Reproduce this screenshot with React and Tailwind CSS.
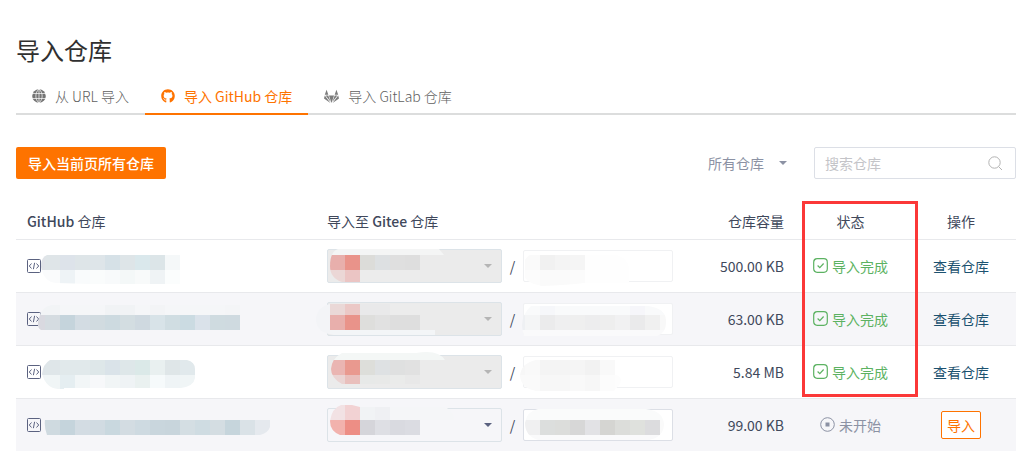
import React from 'react';
import { FaGithub } from 'react-icons/fa';

const GlobeIcon = () => (
  <svg viewBox="0 0 14 14" className="size-[14px] text-[#757575]" aria-hidden="true">
    <circle cx="7" cy="7" r="6.8" fill="currentColor" />
    <path d="M0 4.500h14M0 9.500h14M7 0v14M7 0C2.800 3.500 2.800 10.500 7 14M7 0c4.200 3.500 4.200 10.500 0 14" fill="none" stroke="#fff" strokeWidth="0.7" />
  </svg>
);

const GitlabIcon = () => (
  <svg viewBox="0 0 28 28" className="size-[15px] text-[#7c7c7c]" fill="currentColor" aria-hidden="true">
    <path d="M1.500 12L12 26 0.600 18c-.4-.3-.6-.8-.4-1.300zM9.200 12h9.600L14 26zM26.500 12L16 26l11.400-8c.4-.3.6-.8.4-1.300zM4.800 1.500l3.300 9.300H1.500zM23.200 1.500l3.300 9.300h-6.600zM3 12h5l4.200 12zM25 12h-5l-4.200 12z" />
  </svg>
);

const CodeIcon = () => (
  <svg viewBox="0 0 14 14" className="size-[14px] shrink-0" fill="none" stroke="#5b6280" aria-hidden="true">
    <rect x="0.5" y="0.5" width="13" height="13" rx="1" />
    <path d="M4.500 4.500L2.300 7l2.200 2.500M9.500 4.500L11.700 7l-2.200 2.500M7.600 3.800l-1.200 6.400" />
  </svg>
);

const DoneIcon = () => (
  <svg viewBox="0 0 15 15" className="size-[15px] shrink-0" fill="none" stroke="currentColor" strokeWidth="1.2" aria-hidden="true">
    <rect x="0.7" y="0.7" width="13.6" height="13.6" rx="3.5" />
    <path d="M4.600 7.500l2.200 2.200 3.800-4.200" />
  </svg>
);

const PendingIcon = () => (
  <svg viewBox="0 0 15 15" className="size-[15px] shrink-0" fill="none" stroke="currentColor" aria-hidden="true">
    <circle cx="7.5" cy="7.5" r="6.8" />
    <rect x="5.5" y="5.5" width="4" height="4" fill="currentColor" stroke="none" />
  </svg>
);

const SearchIcon = () => (
  <svg viewBox="0 0 15 15" className="size-[15px] shrink-0" fill="none" stroke="#b3b3b3" aria-hidden="true">
    <circle cx="6.5" cy="6.5" r="5.7" />
    <path d="M10.700 10.700l3.300 3.300" />
  </svg>
);

const Caret = ({ className }) => (
  <svg viewBox="0 0 8 4" className={className} fill="currentColor" aria-hidden="true">
    <path d="M0 0h8L4 4z" />
  </svg>
);

const CELL = 15;

/* Censored text: strips of coloured cells, cut to a rounded outline. */
function Mosaic({ id, outline, strips }) {
  return (
    <svg className="pointer-events-none absolute top-0 left-0 size-px overflow-visible" aria-hidden="true">
      <clipPath id={id}>
        <path d={outline} />
      </clipPath>
      <g clipPath={`url(#${id})`} shapeRendering="crispEdges">
        {strips.map(({ x, y, h, colors }) =>
          colors.map((fill, i) => (
            <rect key={`${x}-${y}-${i}`} x={x + i * CELL} y={y} width={CELL} height={h} fill={fill} />
          ))
        )}
      </g>
    </svg>
  );
}

const rows = [
  {
    size: '500.00 KB',
    done: true,
    source: {
      outline: 'M31 15H164V45H110L40 43Q28 42 25 27Q25 17 31 15z',
      strips: [
        { x: 14, y: 15, h: 15, colors: ['#e0e3e8', '#dfe5e8', '#dde3ea', '#dee5e8', '#dee5e9', '#d6e1e7', '#dee5e8', '#dae8ec', '#dce5e8', '#f5f8f9'] },
        { x: 14, y: 30, h: 14, colors: ['#fafbfc', '#fafbfc', '#eef3f6', '#f9fbfc', '#fafcfc', '#f8fafb', '#f4f8f8', '#f8fafa', '#eff3f5', '#fbfdfd'] },
      ],
    },
    owner: {
      outline: 'M22 9H123L128 15V42H26Q14 38 14 26Q14 12 22 9z',
      strips: [
        { x: 14, y: 9, h: 6, colors: ['#f4f5f5', '#f4f5f5', '#f4f5f5', '#f4f5f5', '#f4f5f5', '#f4f5f5', '#f4f5f5', '#f4f5f5'] },
        { x: 14, y: 15, h: 15, colors: ['#e8afac', '#e9938a', '#dcdcd9', '#dde0e2', '#dfdfdf', '#dedede'] },
        { x: 14, y: 30, h: 12, colors: ['#ebd7d6', '#ebc5c4', '#ececec', '#ececec', '#ececec', '#ececec'] },
      ],
    },
    name: {
      outline: 'M216 14H292Q312 15 313 29V43H268Q252 45 226 46Q207 43 206 30Q208 16 216 14z',
      strips: [
        { x: 209, y: 15, h: 15, colors: ['#fafafa', '#f1f1f1', '#f4f4f4', '#f5f5f5', '#fefefe', '#fefefe', '#fefefe'] },
        { x: 209, y: 30, h: 16, colors: ['#fcfcfc', '#fafafa', '#fafafa', '#fbfbfb', '#fefefe', '#fefefe', '#fefefe'] },
      ],
    },
  },
  {
    size: '63.00 KB',
    done: true,
    source: {
      outline: 'M36 12H224V37H25Q20 34 23 25Q26 13 36 12z',
      strips: [
        { x: 14, y: 12, h: 10, colors: ['#f2f4f6', '#f2f4f6', '#f5f6f8', '#f5f6f8', '#f5f6f8', '#f1f3f5', '#f1f3f5', '#f5f6f8', '#f3f4f6', '#f5f6f8', '#f5f6f8', '#f5f6f8', '#f5f6f8', '#f4f5f7'] },
        { x: 14, y: 22, h: 15, colors: ['#d9d9e0', '#d5dce1', '#c5d4dc', '#d3dce3', '#d1dbe0', '#cddae0', '#d3dde1', '#cfd9e0', '#d8e3e8', '#d0dde2', '#cbdbe2', '#dae2ea', '#cfdbe0', '#cfdae0'] },
      ],
    },
    owner: {
      outline: 'M14 11H134V40L127 42H18Q0 40 0 26Q1 14 14 11z',
      strips: [
        { x: -1, y: 11, h: 32, colors: ['#f3f4f7'] },
        { x: 14, y: 11, h: 11, colors: ['#ead8d7', '#ebc8c6', '#e9e9ea', '#e9e9ea', '#ececec', '#ececec'] },
        { x: 14, y: 22, h: 15, colors: ['#e8afac', '#e9938a', '#dededc', '#e1e1e1', '#dedede', '#dedede'] },
        { x: 14, y: 37, h: 5, colors: ['#f3f5f7', '#f3f5f7', '#f3f5f7', '#f3f5f7', '#f3f5f7', '#f3f5f7', '#f3f5f7'] },
      ],
    },
    name: {
      outline: 'M215 13H332Q349 15 350 27Q351 40 341 43H208Q202 25 215 13z',
      strips: [
        { x: 194, y: 13, h: 9, colors: ['#f9fafb', '#f9fafb', '#f6f7fa', '#f9fafb', '#f9fafb', '#f9fafb', '#f9fafb', '#f9fafb', '#f6f6fa', '#f9fafb', '#f9fafb'] },
        { x: 194, y: 22, h: 15, colors: ['#eef0f3', '#f4f5f6', '#ebebec', '#efeff0', '#efefef', '#ededee', '#eeeeee', '#f1f1f2', '#eaeaeb', '#f0f0f0', '#f8f8f8'] },
        { x: 194, y: 37, h: 6, colors: ['#fafafb', '#fafafb', '#fafafb', '#fafafb', '#fafafb', '#fafafb', '#fafafb', '#fafafb', '#fafafb', '#fafafb', '#fafafb'] },
      ],
    },
  },
  {
    size: '5.84 MB',
    done: true,
    source: {
      outline: 'M34 14H171Q179 16 179 23V32Q178 40 165 42H48V43H42Q30 42 26 28Q27 18 34 14z',
      strips: [
        { x: 14, y: 14, h: 15, colors: ['#dfe5e9', '#dfe6e9', '#e1e9eb', '#e1e9eb', '#dee7e9', '#dae3e9', '#dee7e9', '#dbe9e8', '#e9f0f0', '#dfe6e8', '#e1e9ec'] },
        { x: 14, y: 29, h: 15, colors: ['#f0f4f6', '#f0f5f6', '#e5eef1', '#f2f6f7', '#f7f8fa', '#f1f5f6', '#eff3f5', '#eaf1f0', '#f6fafb', '#eff4f6', '#f0f5f6'] },
      ],
    },
    owner: {
      outline: 'M26 7L100 7Q122 3 129 14V38H26Q15 32 15 23Q16 12 26 7z',
      strips: [
        { x: 14, y: 5, h: 9, colors: ['#f4f7f6', '#f4f7f6', '#f4f7f6', '#f4f7f6', '#f4f7f6', '#f4f7f6', '#f4f7f6', '#f4f7f6'] },
        { x: 14, y: 14, h: 15, colors: ['#eab5b2', '#e9998f', '#dddeda', '#dee1e3', '#dfe0e0', '#e1e1e1'] },
        { x: 14, y: 29, h: 9, colors: ['#ead4d3', '#e9bfbc', '#e7e9e8', '#e8e9e8', '#eaebea', '#e8e8e8'] },
      ],
    },
    name: {
      outline: 'M220 14H299V29Q307 30 304 38L298 45H220Q205 42 204 30Q205 17 220 14z',
      strips: [
        { x: 194, y: 14, h: 15, colors: ['#f7f7f7', '#f9f9f9', '#f4f4f4', '#f4f4f4', '#f5f5f5', '#f2f2f2', '#f9f9f9'] },
        { x: 194, y: 29, h: 16, colors: ['#fafafa', '#fafafa', '#f7f7f7', '#f7f7f7', '#f9f9f9', '#f7f7f7', '#fcfcfc', '#fdfdfd'] },
      ],
    },
  },
  {
    size: '99.00 KB',
    done: false,
    source: {
      outline: 'M29 21H254V28Q252 34 244 36H31Q28 28 29 21z',
      strips: [
        { x: 14, y: 21, h: 15, colors: ['#d0dbe1', '#cfdae0', '#c5d4dc', '#d3dce3', '#d1dbe2', '#c9d8df', '#d3dce2', '#cedae1', '#c9d6dd', '#c8d5dc', '#d4dee3', '#cfdce2', '#d4dde2', '#c6d5dc', '#dae2e7', '#e5e9ee'] },
      ],
    },
    owner: {
      outline: 'M25 6H36L44 8H129Q138 12 138 21V36H24Q14 32 14 22Q16 9 25 6z',
      strips: [
        { x: 14, y: 6, h: 15, colors: ['#f2e2e4', '#f2d2d3', '#f1f3f5', '#eff0f3', '#f5f6f8', '#f5f6f8', '#f5f6f8', '#f5f6f8', '#f5f6f8'] },
        { x: 14, y: 21, h: 15, colors: ['#f2b2ad', '#ed8e85', '#d5d5da', '#dedfe4', '#d9dae0', '#dbdce2'] },
      ],
    },
    name: {
      outline: 'M222 10H330Q347 12 348 25Q348 38 333 41H222Q209 37 209 24Q211 12 222 10z',
      strips: [
        { x: 209, y: 9, h: 12, colors: ['#fafbfb', '#fafbfb', '#fafbfb', '#fafbfb', '#fafbfb', '#fafbfb', '#fafbfb', '#fafbfb', '#fafbfb', '#fafbfb'] },
        { x: 209, y: 21, h: 15, colors: ['#f0f0f1', '#dcdedd', '#dcdddb', '#d7d7d7', '#e2e2e5', '#d5d5d2', '#dcddda', '#dfe1dd', '#dcdcde', '#fafafa'] },
        { x: 209, y: 36, h: 6, colors: ['#fafafb', '#fafafb', '#fafafb', '#fafafb', '#fafafb', '#fafafb', '#fafafb', '#fafafb', '#fafafb', '#fafafb'] },
      ],
    },
  },
];

const tabs = [
  { label: '从 URL 导入', icon: <GlobeIcon /> },
  { label: '导入 GitHub 仓库', icon: <FaGithub className="size-[14px]" />, active: true },
  { label: '导入 GitLab 仓库', icon: <GitlabIcon /> },
];

function RepoRow({ row, index }) {
  return (
    <tr className={`h-[53px] border-b border-[#e8e9ec] last:border-b-0 ${index % 2 ? 'bg-[#f6f6f9]' : 'bg-white'}`}>
      <td className="relative px-[11px]">
        <CodeIcon />
        <Mosaic id={`source-${index}`} {...row.source} />
      </td>
      <td className="relative px-[11px]">
        <div className="flex items-center">
          <div className="relative">
            <select
              aria-label="Gitee 空间"
              disabled={row.done}
              className={`block h-[34px] w-[175px] appearance-none rounded-xs border border-[#dce3e8] ${row.done ? 'bg-[#ebebeb]' : 'bg-transparent'}`}
            />
            <Caret className={`pointer-events-none absolute top-[15px] right-[10px] h-1 w-2 ${row.done ? 'text-[#b5b5b5]' : 'text-[#5b6280]'}`} />
          </div>
          <span className="w-[21px] text-center">/</span>
          <input
            type="text"
            aria-label="仓库名称"
            disabled={row.done}
            className={`h-8 w-[150px] rounded-xs border bg-white px-2 ${row.done ? 'border-[#f0f1f3]' : 'border-[#dcdfe6]'}`}
          />
        </div>
        <Mosaic id={`owner-${index}`} {...row.owner} />
        <Mosaic id={`name-${index}`} {...row.name} />
      </td>
      <td className="px-[11px] text-right">{row.size}</td>
      <td>
        <div className={`flex items-center justify-center gap-1 ${row.done ? 'text-[#5cb262]' : 'text-[#8c92a4]'}`}>
          {row.done ? <DoneIcon /> : <PendingIcon />}
          {row.done ? '导入完成' : '未开始'}
        </div>
      </td>
      <td className="text-center">
        {row.done ? (
          <a href="#repo" className="text-[#1c5270]">查看仓库</a>
        ) : (
          <button type="button" className="h-7 rounded-xs border border-[#fe7300] bg-white px-[5px] leading-none text-[#fe7300]">导入</button>
        )}
      </td>
    </tr>
  );
}

export default function App() {
  return (
    <main className="bg-white pt-8 pr-[3px] pl-4 font-['Noto_Sans_CJK_SC',sans-serif] text-sm text-[#40485b]">
      <h1 className="text-2xl leading-9 text-[#303030]">导入仓库</h1>
      <nav className="mt-[11px] flex h-9 border-b-2 border-[#dcdddd]">
        {tabs.map((tab) => (
          <a
            key={tab.label}
            href="#tab"
            className={`-mb-0.5 flex h-9 items-center gap-[9px] border-b-2 px-4 ${tab.active ? 'border-[#fe7300] text-[#fe7300]' : 'border-transparent font-light text-[#606060]'}`}
          >
            {tab.icon}
            {tab.label}
          </a>
        ))}
      </nav>
      <div className="mt-8 flex items-center">
        <button type="button" className="h-8 rounded-xs bg-[#fe7300] px-3 font-medium text-white">导入当前页所有仓库</button>
        <button type="button" className="mr-[27px] ml-auto flex items-center gap-[15px] text-[#8c92a4]">
          所有仓库
          <Caret className="h-1 w-2" />
        </button>
        <label className="flex h-8 w-[202px] items-center rounded-xs border border-[#dcdfe6] pr-3 pl-[10px]">
          <input type="search" aria-label="搜索仓库" placeholder="搜索仓库" className="min-w-0 flex-1 outline-none placeholder:text-[#c4c4c8]" />
          <SearchIcon />
        </label>
      </div>
      <table className="mt-6 w-full table-fixed border-collapse">
        <colgroup>
          <col className="w-[30%]" />
          <col />
          <col className="w-[110px]" />
          <col className="w-[111px]" />
          <col className="w-[110px]" />
        </colgroup>
        <thead>
          <tr className="h-9 border-b border-[#e8e9ec] text-left">
            <th className="px-[11px] font-normal"><span className="font-medium">GitHub</span> 仓库</th>
            <th className="px-[11px] font-normal">导入至 <span className="font-medium">Gitee</span> 仓库</th>
            <th className="px-[11px] text-right font-normal">仓库容量</th>
            <th className="relative text-center font-normal">
              状态
              <div className="pointer-events-none absolute -top-0.5 left-[7px] z-10 h-[196px] w-[116px] border-3 border-[#fb3838]" />
            </th>
            <th className="text-center font-normal">操作</th>
          </tr>
        </thead>
        <tbody>
          {rows.map((row, index) => (
            <RepoRow key={row.size} row={row} index={index} />
          ))}
        </tbody>
      </table>
    </main>
  );
}
